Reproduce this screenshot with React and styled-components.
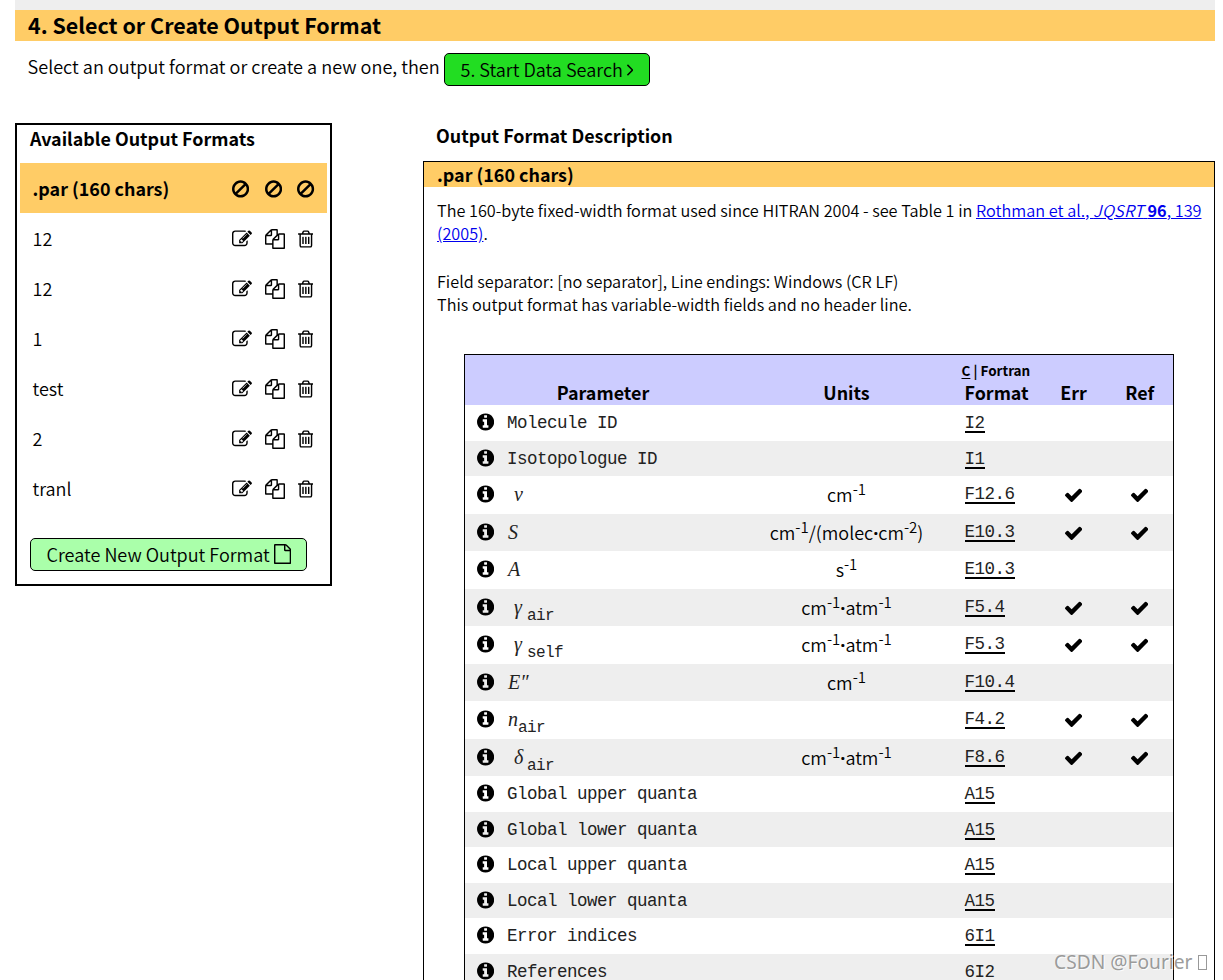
import React from "react";
import styled, { createGlobalStyle } from "styled-components";

const sans = `"Noto Sans CJK SC", "Open Sans", sans-serif`;
const mono = `"Liberation Mono", monospace`;

const GlobalStyle = createGlobalStyle`
  html, body { margin: 0; padding: 0; background: #fff; }
  body { font-family: ${sans}; font-weight: 350; color: #000; }
  * { box-sizing: border-box; }
`;

const ICONS = {
  edit: ["0 0 1792 1792", "M888 1184l116-116-152-152-116 116v56h96v96h56zm440-720q-16-16-33 1l-350 350q-17 17-1 33t33-1l350-350q17-17 1-33zm80 594v190q0 119-84.5 203.5t-203.5 84.5h-832q-119 0-203.5-84.5t-84.5-203.5v-832q0-119 84.5-203.5t203.5-84.5h832q63 0 117 25 15 7 18 23 3 17-9 29l-49 49q-14 14-32 8-23-6-45-6h-832q-66 0-113 47t-47 113v832q0 66 47 113t113 47h832q66 0 113-47t47-113v-126q0-13 9-22l64-64q15-15 35-7t20 29zm-96-738l288 288-672 672h-288v-288zm444 132l-92 92-288-288 92-92q28-28 68-28t68 28l152 152q28 28 28 68t-28 68z"],
  copy: ["0 0 1792 1792", "M1696 384q40 0 68 28t28 68v1216q0 40-28 68t-68 28h-960q-40 0-68-28t-28-68v-288h-544q-40 0-68-28t-28-68v-672q0-40 20-88t48-76l408-408q28-28 76-48t88-20h416q40 0 68 28t28 68v328q68-40 128-40h416zm-544 213l-299 299h299v-299zm-640-384l-299 299h299v-299zm196 647l316-316v-416h-384v416q0 40-28 68t-68 28h-416v640h512v-256q0-40 20-88t48-76zm956 804v-1152h-384v416q0 40-28 68t-68 28h-416v640h896z"],
  trash: ["192 0 1408 1792", "M704 736v576q0 14-9 23t-23 9h-64q-14 0-23-9t-9-23v-576q0-14 9-23t23-9h64q14 0 23 9t9 23zm256 0v576q0 14-9 23t-23 9h-64q-14 0-23-9t-9-23v-576q0-14 9-23t23-9h64q14 0 23 9t9 23zm256 0v576q0 14-9 23t-23 9h-64q-14 0-23-9t-9-23v-576q0-14 9-23t23-9h64q14 0 23 9t9 23zm128 724v-948h-896v948q0 22 7 40.5t14.5 27 10.5 8.5h832q3 0 10.5-8.5t14.5-27 7-40.5zm-672-1076h448l-48-117q-7-9-17-11h-317q-10 2-17 11zm928 32v64q0 14-9 23t-23 9h-96v948q0 83-47 143.5t-113 60.5h-832q-66 0-113-58.5t-47-141.5v-952h-96q-14 0-23-9t-9-23v-64q0-14 9-23t23-9h309l70-167q15-37 54-63t79-26h320q40 0 79 26t54 63l70 167h309q14 0 23 9t9 23z"],
  ban: ["128 0 1536 1792", "M1440 893q0-161-87-295l-754 753q137 89 297 89 111 0 211.5-43.5t173.5-116.5 116-174.5 43-212.5zm-999 299l755-754q-135-91-300-91-148 0-273 73t-198 199-73 274q0 162 89 299zm1223-299q0 157-61 300t-163.5 246-245 164-298.5 61-298.5-61-245-164-163.5-246-61-300 61-299.5 163.5-245.5 245-164 298.5-61 298.5 61 245 164 163.5 245.5 61 299.5z"],
  check: ["121 0 1550 1792", "M1671 566q0 40-28 68l-724 724-136 136q-28 28-68 28t-68-28l-136-136-362-362q-28-28-28-68t28-68l136-136q28-28 68-28t68 28l294 295 656-657q28-28 68-28t68 28l136 136q28 28 28 68z"],
  info: ["128 0 1536 1792", "M1152 1376v-160q0-14-9-23t-23-9h-96v-512q0-14-9-23t-23-9h-320q-14 0-23 9t-9 23v160q0 14 9 23t23 9h96v320h-96q-14 0-23 9t-9 23v160q0 14 9 23t23 9h448q14 0 23-9t9-23zm-128-896v-160q0-14-9-23t-23-9h-192q-14 0-23 9t-9 23v160q0 14 9 23t23 9h192q14 0 23-9t9-23zm640 416q0 209-103 385.5t-279.5 279.5-385.5 103-385.5-103-279.5-279.5-103-385.5 103-385.5 279.5-279.5 385.5-103 385.5 103 279.5 279.5 103 385.5z"],
  file: ["128 0 1536 1792", "M1596 380q28 28 48 76t20 88v1152q0 40-28 68t-68 28h-1344q-40 0-68-28t-28-68v-1600q0-40 28-68t68-28h896q40 0 88 20t76 48zm-444-244v376h376q-10-29-22-41l-313-313q-12-12-41-22zm384 1528v-1024h-416q-40 0-68-28t-28-68v-416h-768v1536h1280z"],
  angle: ["589 -30 582 1792", "M1171 960q0 13-10 23l-466 466q-10 10-23 10t-23-10l-50-50q-10-10-10-23t10-23l393-393-393-393q-10-10-10-23t10-23l50-50q10-10 23-10t23 10l466 466q10 10 10 23z"],
};

const Glyph = styled.svg`
  display: block;
  height: 20px;
  width: auto;
  flex: none;
  fill: #000;
`;
const Icon = ({ name }) => (
  <Glyph viewBox={ICONS[name][0]}>
    <path d={ICONS[name][1]} />
  </Glyph>
);

const Page = styled.div`
  position: relative;
  width: 1223px;
  height: 980px;
  overflow: hidden;
  padding: 0 8px 0 15px;
  display: flex;
  flex-direction: column;
`;
const TopStrip = styled.div`
  height: 10px;
  flex: none;
  background: #eee;
`;
const SectionTitle = styled.h2`
  margin: 0;
  flex: none;
  height: 31px;
  padding-left: 13px;
  background: #fc6;
  font-size: 21.45px;
  font-weight: 700;
  line-height: 29px;
  white-space: nowrap;
`;
const Intro = styled.div`
  flex: none;
  display: flex;
  gap: 4px;
  padding: 12px 0 0 12.5px;
  height: 82px;
  font-size: 18.1px;
  line-height: 26px;
  white-space: nowrap;
`;
const IntroText = styled.span`
  width: 412.5px;
`;
const Button = styled.button`
  display: flex;
  align-items: center;
  gap: 4px;
  height: 33px;
  width: ${(p) => p.$width}px;
  padding: 0 0 1px 15.5px;
  border: 1px solid #000;
  border-radius: 5px;
  background: ${(p) => p.$color};
  color: #000;
  font: 350 18.07px ${sans};
  white-space: nowrap;
`;
const Columns = styled.div`
  flex: none;
  display: flex;
  align-items: flex-start;
  justify-content: space-between;
`;
const FormatBox = styled.aside`
  width: 317px;
  height: 463px;
  border: 2px solid #000;
  padding: 0 3px;
`;
const BoxTitle = styled.h3`
  margin: 0;
  height: 38px;
  padding-left: 10px;
  font-size: 17.9px;
  font-weight: 700;
  line-height: 27px;
`;
const FormatRow = styled.div`
  height: 50px;
  display: flex;
  align-items: center;
  justify-content: space-between;
  padding: 0 ${(p) => (p.$active ? 12.5 : 13.8)}px 0 12.5px;
  background: ${(p) => (p.$active ? "#fc6" : "transparent")};
  font-size: ${(p) => (p.$active ? 17.9 : 18)}px;
  font-weight: ${(p) => (p.$active ? 700 : 350)};
`;
const RowActions = styled.div`
  display: flex;
  gap: ${(p) => (p.$active ? 15.4 : 12.7)}px;
  padding-top: 1px;
`;
const BoxFooter = styled.div`
  padding: 25px 0 0 10px;
`;
const Description = styled.main`
  width: 792px;
`;
const DescriptionTitle = styled.h3`
  margin: 0;
  height: 38px;
  padding-left: 13px;
  font-size: 17.9px;
  font-weight: 700;
  line-height: 24px;
`;
const Panel = styled.section`
  height: 900px;
  border: 1px solid #000;
`;
const PanelTitle = styled.div`
  height: 25px;
  padding-left: 13px;
  background: #fc6;
  font-size: 17.9px;
  font-weight: 700;
  line-height: 24px;
`;
const Copy = styled.div`
  height: 167px;
  padding: 12px 0 0 13px;
  font-size: 16.26px;
  line-height: 23.4px;
  white-space: nowrap;
`;
const Para = styled.p`
  margin: 0 0 24px;
`;
const Link = styled.a`
  color: #00e;
  text-decoration: underline;
  i { letter-spacing: 0.2px; }
`;
const Table = styled.div`
  width: 710px;
  margin-left: 40px;
  border: 1px solid #000;
`;
const Row = styled.div`
  display: grid;
  grid-template-columns: 42px 235px 209px 89.5px 66px 66.5px;
  height: ${(p) => (p.$tall ? 37.5 : 35.5)}px;
  background: ${(p) => (p.$shaded ? "#eee" : "#fff")};
`;
const HeadRow = styled(Row)`
  height: 50px;
  padding-bottom: 1px;
  background: #ccf;
  font-size: 17.9px;
  font-weight: 700;
  line-height: 23px;
  align-items: end;
  text-align: center;
`;
const FormatHead = styled.div`
  text-align: left;
  padding-left: 13.5px;
`;
const LangSwitch = styled.div`
  margin-left: -3px;
  font-size: 13.5px;
  line-height: 22px;
  u { text-underline-offset: 2px; }
`;
const ParamHead = styled.div`
  padding-left: 0;
  margin-right: 43px;
`;
const InfoCell = styled.div`
  padding: ${(p) => (p.$tall ? 8 : 7)}px 0 0 12px;
`;
const Param = styled.div`
  font-family: ${mono};
  font-size: 17.5px;
  letter-spacing: -0.5px;
  line-height: 37px;
  white-space: nowrap;
  color: #222;
`;
const Symbol = styled.i`
  display: inline-block;
  min-width: ${(p) => (p.$wide ? 20 : 10)}px;
  padding-left: ${(p) => (p.$wide ? 7 : 1)}px;
  font-family: "Liberation Serif", serif;
  font-size: 20px;
  letter-spacing: 0;
`;
const Sub = styled.sub`
  display: inline-block;
  font-size: 16px;
  letter-spacing: -0.6px;
  line-height: 0;
  vertical-align: -6px;
`;
const Units = styled.div`
  text-align: center;
  font-size: 18px;
  line-height: 37px;
  white-space: nowrap;
  sup { font-size: 15px; line-height: 0; vertical-align: 7px; }
`;
const Dot = styled.span`
  font-family: "Open Sans", sans-serif;
  font-weight: 700;
  line-height: 0;
`;
const Code = styled.div`
  padding: 8px 0 0 13.5px;
  font-family: ${mono};
  font-size: 17.5px;
  letter-spacing: -0.5px;
  line-height: 21px;
  color: #222;
  span { display: block; width: max-content; height: 20px; border-bottom: 2px solid #000; }
`;
const Mark = styled.div`
  display: flex;
  justify-content: center;
  padding-top: 9px;
`;
const Watermark = styled.div`
  position: absolute;
  left: 1054px;
  top: 948px;
  display: flex;
  align-items: center;
  gap: 5px;
  font: 400 19.2px/28px "Noto Sans", sans-serif;
  color: rgba(130, 130, 130, 0.8);
  text-shadow: 1px 1px 0 rgba(255, 255, 255, 0.8);
  white-space: nowrap;
`;
const MissingGlyph = styled.span`
  width: 9px;
  height: 15px;
  border: 1px solid #999;
`;

const FORMATS = ["12", "12", "1", "test", "2", "tranl"];

const perCm = <>cm<sup>-1</sup></>;
const perCmAtm = <>cm<sup>-1</sup><Dot>·</Dot>atm<sup>-1</sup></>;
const FIELDS = [
  { name: "Molecule ID", code: "I2" },
  { name: "Isotopologue ID", code: "I1" },
  { symbol: "ν", wide: true, units: perCm, code: "F12.6", marks: true },
  { symbol: "S", units: <>cm<sup>-1</sup>/(molec<Dot>·</Dot>cm<sup>-2</sup>)</>, code: "E10.3", marks: true },
  { symbol: "A", units: <>s<sup>-1</sup></>, code: "E10.3" },
  { symbol: "γ", wide: true, sub: "air", units: perCmAtm, code: "F5.4", marks: true },
  { symbol: "γ", wide: true, sub: "self", units: perCmAtm, code: "F5.3", marks: true },
  { symbol: "E″", units: perCm, code: "F10.4" },
  { symbol: "n", sub: "air", code: "F4.2", marks: true },
  { symbol: "δ", wide: true, sub: "air", units: perCmAtm, code: "F8.6", marks: true },
  { name: "Global upper quanta", code: "A15" },
  { name: "Global lower quanta", code: "A15" },
  { name: "Local upper quanta", code: "A15" },
  { name: "Local lower quanta", code: "A15" },
  { name: "Error indices", code: "6I1" },
  { name: "References", code: "6I2" },
];

const FieldRow = ({ field, shaded }) => (
  <Row $tall={!!field.symbol} $shaded={shaded}>
    <InfoCell $tall={!!field.symbol}><Icon name="info" /></InfoCell>
    <Param>
      {field.name}
      {field.symbol && <Symbol $wide={field.wide}>{field.symbol}</Symbol>}
      {field.sub && <Sub>{field.sub}</Sub>}
    </Param>
    <Units>{field.units}</Units>
    <Code><span>{field.code}</span></Code>
    <Mark>{field.marks && <Icon name="check" />}</Mark>
    <Mark>{field.marks && <Icon name="check" />}</Mark>
  </Row>
);

export default function App() {
  return (
    <>
      <GlobalStyle />
      <Page>
        <TopStrip />
        <SectionTitle>4. Select or Create Output Format</SectionTitle>
        <Intro>
          <IntroText>Select an output format or create a new one, then</IntroText>
          <Button $width={206} $color="#2d2">5. Start Data Search<Icon name="angle" /></Button>
        </Intro>
        <Columns>
          <FormatBox>
            <BoxTitle>Available Output Formats</BoxTitle>
            <FormatRow $active>
              <span>.par (160 chars)</span>
              <RowActions $active><Icon name="ban" /><Icon name="ban" /><Icon name="ban" /></RowActions>
            </FormatRow>
            {FORMATS.map((name, i) => (
              <FormatRow key={i}>
                <span>{name}</span>
                <RowActions><Icon name="edit" /><Icon name="copy" /><Icon name="trash" /></RowActions>
              </FormatRow>
            ))}
            <BoxFooter>
              <Button $width={277} $color="#afa">Create New Output Format<Icon name="file" /></Button>
            </BoxFooter>
          </FormatBox>
          <Description>
            <DescriptionTitle>Output Format Description</DescriptionTitle>
            <Panel>
              <PanelTitle>.par (160 chars)</PanelTitle>
              <Copy>
                <Para>
                  The 160-byte fixed-width format used since HITRAN 2004 - see Table 1 in{" "}
                  <Link href="#">Rothman et al., <i>JQSRT</i> <b>96</b>, 139<br />(2005)</Link>.
                </Para>
                <Para>
                  Field separator: [no separator], Line endings: Windows (CR LF)<br />
                  This output format has variable-width fields and no header line.
                </Para>
              </Copy>
              <Table>
                <HeadRow>
                  <span />
                  <ParamHead>Parameter</ParamHead>
                  <span>Units</span>
                  <FormatHead>
                    <LangSwitch><u>C</u> | Fortran</LangSwitch>
                    Format
                  </FormatHead>
                  <span>Err</span>
                  <span>Ref</span>
                </HeadRow>
                {FIELDS.map((field, i) => (
                  <FieldRow key={i} field={field} shaded={i % 2 === 1} />
                ))}
              </Table>
            </Panel>
          </Description>
        </Columns>
        <Watermark>CSDN @Fourier<MissingGlyph /></Watermark>
      </Page>
    </>
  );
}
